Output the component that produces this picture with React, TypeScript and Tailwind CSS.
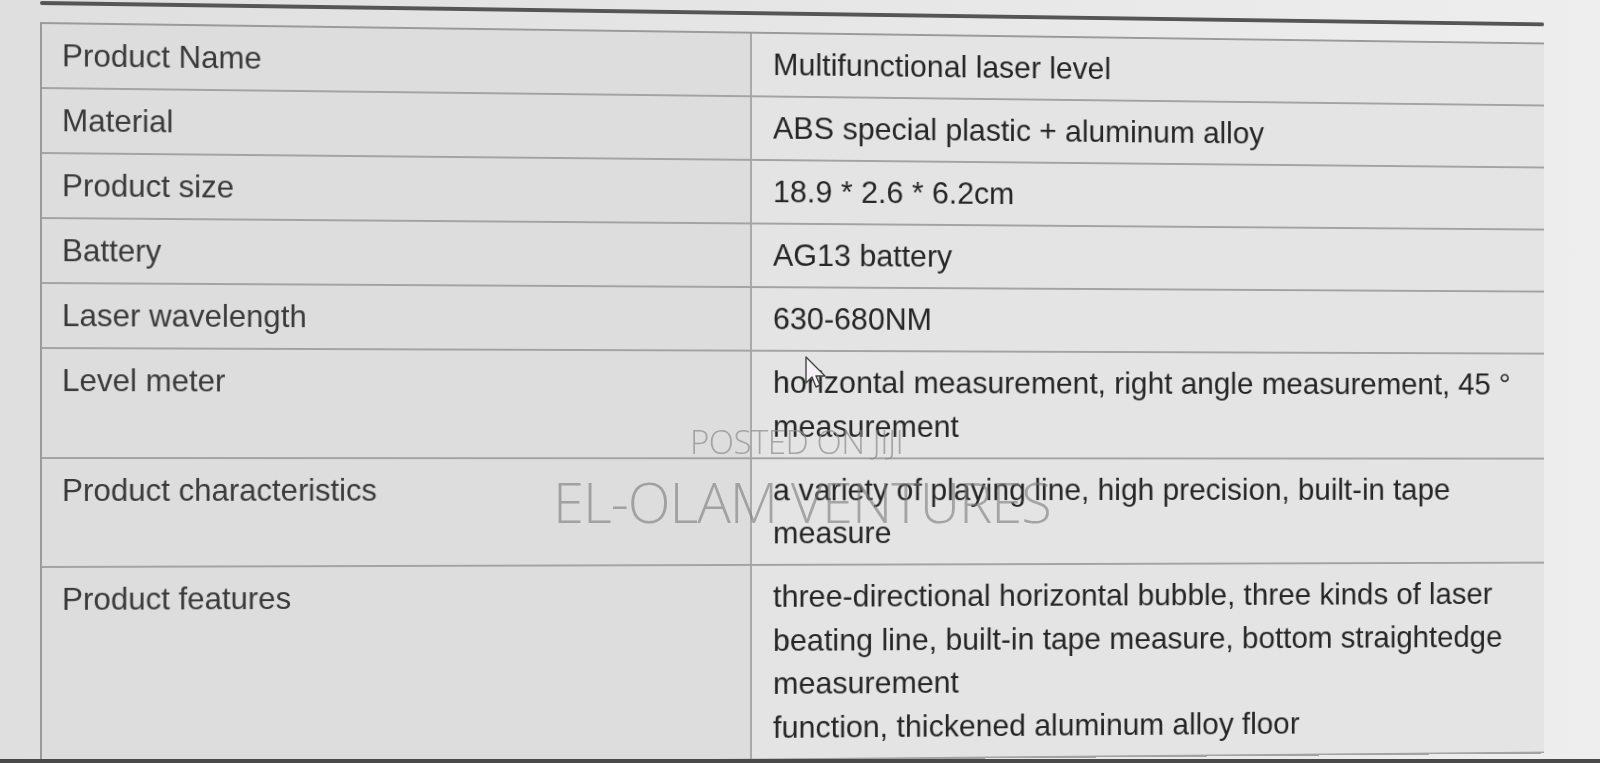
import React from 'react'

type Row = { label: string; lines: string[] }

const rows: Row[] = [
  { label: 'Product Name', lines: ['Multifunctional laser level'] },
  { label: 'Material', lines: ['ABS special plastic + aluminum alloy'] },
  { label: 'Product size', lines: ['18.9 * 2.6 * 6.2cm'] },
  { label: 'Battery', lines: ['AG13 battery'] },
  { label: 'Laser wavelength', lines: ['630-680NM'] },
  {
    label: 'Level meter',
    lines: ['horizontal measurement, right angle measurement, 45 °', 'measurement'],
  },
  {
    label: 'Product characteristics',
    lines: ['a variety of playing line, high precision, built-in tape', 'measure'],
  },
  {
    label: 'Product features',
    lines: [
      'three-directional horizontal bubble, three kinds of laser',
      'beating line, built-in tape measure, bottom straightedge',
      'measurement',
      'function, thickened aluminum alloy floor',
    ],
  },
]

export default function App() {
  return (
    <div className="relative h-[763px] w-[1600px] overflow-hidden bg-gradient-to-r from-[#dfdfdf] via-[#e6e6e6] to-[#eeeeee] font-['Liberation_Sans',Arial,sans-serif]">
      {/* spec table, photographed at a slight angle */}
      <div className="ml-[40px] w-[1577px] pt-[1px] origin-[0_471px] [transform:perspective(1000px)_rotateY(1.74deg)]">
        <div className="h-[4px] rounded-full bg-[#555555]" />
        <div className="mt-[17px] border-t-2 border-l-2 border-[#9a9a9a]">
          {rows.map((row) => (
            <div key={row.label} className="flex border-b-2 border-[#a3a3a3]">
              <div className="w-[726px] shrink-0 border-r-2 border-[#a8a8a8] bg-[#dddddd] px-[20px] pt-[9px] pb-[10px] text-[31.5px] leading-[44px] text-[#3a3a3a]">
                {row.label}
              </div>
              <div className="flex-1 bg-[#e4e4e4] px-[22px] pt-[9px] pb-[9.5px] text-[32px] leading-[44.5px] text-[#262626]">
                {row.lines.map((line) => (
                  <div key={line} className="whitespace-nowrap">
                    {line}
                  </div>
                ))}
              </div>
            </div>
          ))}
        </div>
      </div>

      {/* watermarks */}
      <div className="pointer-events-none absolute left-[690px] top-[417px] font-['Open_Sans',sans-serif] text-[33px] font-light tracking-[-0.5px] text-[#8a8a8a]/70">
        POSTED ON JIJI
      </div>
      <div className="pointer-events-none absolute left-[553px] top-[459px] font-['Open_Sans',sans-serif] text-[56px] font-light tracking-[-1px] text-[#7a7a7a]/60">
        EL-OLAM VENTURES
      </div>

      {/* mouse pointer */}
      <svg
        className="pointer-events-none absolute left-[804px] top-[355px]"
        width="26"
        height="34"
        viewBox="0 0 26 34"
      >
        <path
          d="M2 2 L2 28 L8 22 L12 32 L16 30 L12 21 L21 21 Z"
          fill="#f4f0f6"
          stroke="#444"
          strokeWidth="1.4"
          strokeLinejoin="round"
        />
      </svg>

      {/* screen bezel at bottom */}
      <div className="absolute inset-x-0 bottom-0 h-[4px] bg-[#4a4a4a]" />
    </div>
  )
}
